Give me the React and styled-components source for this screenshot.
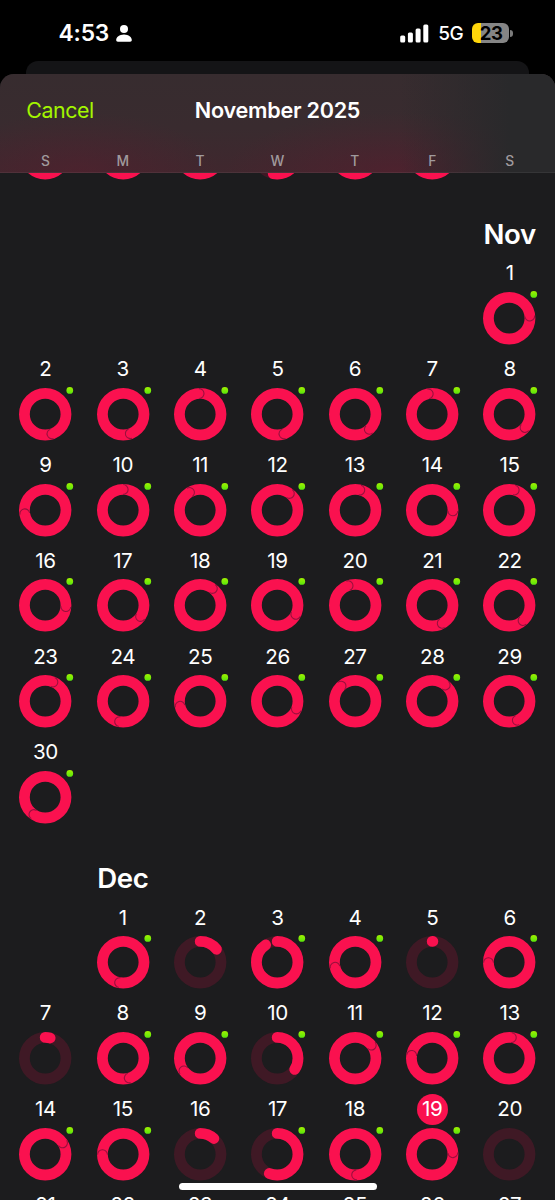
import React from 'react'
import styled, { createGlobalStyle } from 'styled-components';

const GlobalStyle = createGlobalStyle`
	html, body {
		margin: 0;
		padding: 0;
		background: #000;
	}
	* {
		box-sizing: border-box;
	}
`

const Screen = styled.div`
	position: relative;
	display: flex;
	flex-direction: column;
	width: 555px;
	height: 1200px;
	overflow: hidden;
	background: #000;
	color: #fff;
	font-family: Inter, 'Liberation Sans', sans-serif;
`

const StatusBar = styled.div`
	display: flex;
	justify-content: space-between;
	align-items: center;
	height: 61px;
	padding: 5px 42.5px 0 58.5px;
	flex-shrink: 0;
`

const StatusGroup = styled.div`
	display: flex;
	align-items: center;
	gap: ${props => props.$gap};
`

const Clock = styled.span`
	font-size: 22.8px;
	font-weight: 600;
	line-height: 28px;
	letter-spacing: -0.15px;
`

const Network = styled.span`
	font-size: 19px;
	font-weight: 500;
	line-height: 24px;
	letter-spacing: -0.7px;
	margin: 2px 0 0 9.5px;
`

const Battery = styled.div`
	display: flex;
	align-items: center;
	gap: 1.2px;
	margin-left: 9.5px;
`

const BatteryBody = styled.div`
	width: 36.5px;
	height: 20px;
	padding-left: 1px;
	border-radius: 6px;
	background: linear-gradient(90deg, #ffd60a 8.8px, #858585 8.8px);
	color: #000;
	font-size: 18.5px;
	font-weight: 700;
	line-height: 20px;
	letter-spacing: -0.3px;
	text-align: center;
`

const BatteryTip = styled.div`
	width: 2.4px;
	height: 7px;
	border-radius: 0 3px 3px 0;
	background: #7b7b7b;
`

const BackCard = styled.div`
	height: 13px;
	margin: 0 26px;
	border-radius: 12px 12px 0 0;
	background: #141416;
	flex-shrink: 0;
`

const Sheet = styled.div`
	display: flex;
	flex-direction: column;
	flex: 1;
	min-height: 0;
	overflow: hidden;
	border-radius: 14px 14px 0 0;
	background: #1c1c1e;
`

const Header = styled.div`
	display: flex;
	flex-direction: column;
	justify-content: space-between;
	height: 99px;
	padding-top: 21px;
	flex-shrink: 0;
	box-shadow: inset 0 -1px rgba(255, 255, 255, 0.06);
	background:
		linear-gradient(90deg, rgba(41, 41, 43, 0) 72%, #29292b 92%),
		radial-gradient(140px 60px at 80px 98px, rgba(92, 28, 46, 0.42), rgba(92, 28, 46, 0)),
		radial-gradient(170px 60px at 395px 98px, rgba(92, 28, 46, 0.48), rgba(92, 28, 46, 0)),
		linear-gradient(#372c2f, #392b2f 55%, #40272e);
`

const TitleRow = styled.div`
	display: grid;
	grid-template-columns: 1fr auto 1fr;
	align-items: center;
	padding: 0 26.3px;
	line-height: 30px;
`

const Cancel = styled.button`
	justify-self: start;
	padding: 0;
	border: none;
	background: none;
	color: #a3f600;
	font-family: inherit;
	font-size: 21.4px;
	line-height: 30px;
	letter-spacing: -0.45px;
	cursor: pointer;
`

const Title = styled.div`
	font-size: 21.6px;
	font-weight: 600;
	letter-spacing: -0.25px;
`

const Week = styled.div`
	display: grid;
	grid-template-columns: repeat(7, 77.38px);
	padding-left: 6.7px;
	flex-shrink: 0;
`

const WeekDay = styled.div`
	padding-bottom: 2px;
	color: #a09a9d;
	font-size: 13.8px;
	font-weight: 500;
	line-height: 20px;
	text-align: center;
`

const Calendar = styled.div`
	flex: 1;
	min-height: 0;
	overflow: hidden;
`

/* the list is scrolled so only the last row of October peeks out */
const Scrolled = styled.div`
	margin-top: -80.1px;
`

const MonthName = styled.div`
	grid-column: ${props => props.$column};
	height: 69.3px;
	padding-top: 27px;
	font-size: 27.6px;
	font-weight: 600;
	line-height: 36px;
	letter-spacing: -0.4px;
	text-align: center;
	white-space: nowrap;
`

const Day = styled.div`
	display: flex;
	flex-direction: column;
	align-items: center;
	height: 95.87px;
	grid-column: ${props => props.$column || 'auto'};
`

const DayNumber = styled.div`
	min-width: 31px;
	height: 31px;
	margin-bottom: 2.8px;
	border-radius: 16px;
	background: ${props => props.$today ? '#fa114f' : 'transparent'};
	font-size: 20.6px;
	font-weight: 380;
	line-height: 30px;
	letter-spacing: -0.4px;
	text-align: center;
`

const RingSvg = styled.svg`
	display: block;
	overflow: visible;
`

const HomeBar = styled.div`
	position: absolute;
	left: 178.6px;
	bottom: 10.3px;
	width: 198.4px;
	height: 6.8px;
	border-radius: 4px;
	background: #fff;
`

const R = 20.8
const C = 26.2
const LENGTH = 2 * Math.PI * R

// full: the ring is closed and angle is where its overlapping end lies
function Ring({ angle, full, dot }) {
	return (
		<RingSvg width="52.4" height="52.4" viewBox="0 0 52.4 52.4" fill="none">
			<circle cx={C} cy={C} r={R} stroke={full ? '#fa114f' : '#3f1925'} strokeWidth="10.8" />
			{!full && angle > 0 && (
				<circle
					cx={C}
					cy={C}
					r={R}
					stroke="#fa114f"
					strokeWidth="10.8"
					strokeLinecap="round"
					strokeDasharray={`${LENGTH * angle / 360} ${LENGTH}`}
					transform={`rotate(-90 ${C} ${C})`}
				/>
			)}
			{full && (
				<path
					d="M26.2 0.6A4.9 4.9 0 0 1 26.2 10.4"
					stroke="#85103a"
					strokeOpacity="0.85"
					strokeWidth="1.05"
					transform={`rotate(${angle - 14} ${C} ${C})`}
				/>
			)}
			{dot && <circle cx="50.8" cy="2.4" r="3.35" fill="url(#dotFill)" />}
		</RingSvg>
	)
}

// [angle, kind]: 'f' closed ring, 'p' partial, 'd' partial with an award dot
const october = [[90, 'f'], [90, 'f'], [90, 'f'], [190, 'd'], [90, 'f'], [90, 'f']]

const november = [
	[98, 'f'],
	[175, 'f'], [174, 'f'], [11, 'f'], [175, 'f'], [151, 'f'], [3, 'f'], [144, 'f'],
	[274, 'f'], [14, 'f'], [343, 'f'], [50, 'f'], [27, 'f'], [106, 'f'], [28, 'f'],
	[108, 'f'], [137, 'f'], [50, 'f'], [130, 'f'], [354, 'f'], [165, 'f'], [152, 'f'],
	[36, 'f'], [204, 'f'], [270, 'f'], [126, 'f'], [331, 'f'], [53, 'f'], [171, 'f'],
	[227, 'f'],
]

const december = [
	[204, 'f'], [51, 'p'], [324, 'd'], [270, 'f'], [2, 'p'], [283, 'f'],
	[14, 'p'], [177, 'f'], [246, 'f'], [122, 'd'], [65, 'f'], [292, 'f'], [20, 'f'],
	[71, 'f'], [283, 'f'], [41, 'p'], [201, 'd'], [190, 'f'], [100, 'f'], [0, 'p'],
	[0, 'p'], [0, 'p'], [0, 'p'], [0, 'p'], [0, 'p'], [0, 'p'], [0, 'p'],
]

function Month({ name, start, today, days }) {
	return (
		<Week>
			{name && <MonthName $column={start}>{name}</MonthName>}
			{days.map(([angle, kind], i) => (
				<Day key={i} $column={i === 0 ? start : undefined}>
					<DayNumber $today={i + 1 === today}>{name ? i + 1 : null}</DayNumber>
					<Ring angle={angle} full={kind === 'f'} dot={kind !== 'p'} />
				</Day>
			))}
		</Week>
	)
}

function Person() {
	return (
		<svg width="16" height="17" viewBox="0 0 16 17" fill="#fff">
			<circle cx="8" cy="4.1" r="4" />
			<path d="M8 9.4c-4.7 0-7.8 2.8-7.8 5.6 0 1 .6 1.7 1.7 1.7h12.2c1.1 0 1.7-.7 1.7-1.7 0-2.8-3.1-5.6-7.8-5.6z" />
		</svg>
	)
}

function Signal() {
	return (
		<svg width="29" height="19" viewBox="0 0 29 19" fill="#fff">
			<rect x="0.2" y="11.6" width="5" height="6.9" rx="1.5" />
			<rect x="7.9" y="8.6" width="5" height="9.9" rx="1.5" />
			<rect x="15.6" y="4.6" width="5" height="13.9" rx="1.5" />
			<rect x="23.3" y="0.6" width="5" height="17.9" rx="1.5" />
			<defs>
				<linearGradient id="dotFill" x1="0" y1="0" x2="0" y2="1">
					<stop offset="0" stopColor="#a0f000" />
					<stop offset="1" stopColor="#58e60c" />
				</linearGradient>
			</defs>
		</svg>
	)
}

export default function App() {
	return (
		<Screen>
			<GlobalStyle />
			<StatusBar>
				<StatusGroup $gap="7px">
					<Clock>4:53</Clock>
					<Person />
				</StatusGroup>
				<StatusGroup $gap="0">
					<Signal />
					<Network>5G</Network>
					<Battery>
						<BatteryBody>23</BatteryBody>
						<BatteryTip />
					</Battery>
				</StatusGroup>
			</StatusBar>
			<BackCard />
			<Sheet>
				<Header>
					<TitleRow>
						<Cancel>Cancel</Cancel>
						<Title>November 2025</Title>
					</TitleRow>
					<Week>
						{['S', 'M', 'T', 'W', 'T', 'F', 'S'].map((d, i) => <WeekDay key={i}>{d}</WeekDay>)}
					</Week>
				</Header>
				<Calendar>
					<Scrolled>
						<Month start={1} days={october} />
						<Month name="Nov" start={7} days={november} />
						<Month name="Dec" start={2} today={19} days={december} />
					</Scrolled>
				</Calendar>
			</Sheet>
			<HomeBar />
		</Screen>
	)
}
